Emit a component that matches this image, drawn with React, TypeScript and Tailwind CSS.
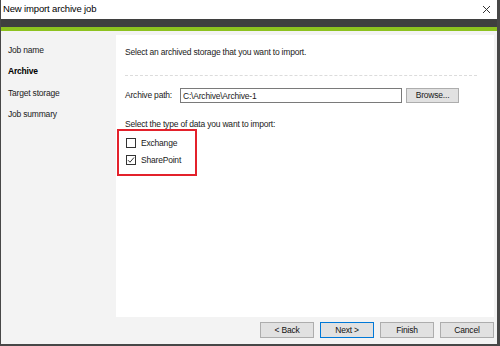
import { useState } from 'react';

const steps = ['Job name', 'Archive', 'Target storage', 'Job summary'];

function CheckBox({ checked, label, onToggle }: { checked: boolean; label: string; onToggle: () => void }) {
  return (
    <label className="flex items-center gap-[5px] h-[12px] cursor-default" onClick={onToggle}>
      <span className="w-[10px] h-[10px] border border-[#333333] bg-white flex items-center justify-center">
        {checked && (
          <svg width="8" height="8" viewBox="0 0 8 8">
            <path d="M1 4.2 L3 6.2 L7 1.5" fill="none" stroke="#333" strokeWidth="1" />
          </svg>
        )}
      </span>
      <span>{label}</span>
    </label>
  );
}

function Button({ label, primary }: { label: string; primary?: boolean }) {
  return (
    <button
      className={
        'w-[54px] h-[16px] bg-[#e1e1e1] border text-[8.5px] tracking-[-0.2px] leading-none text-[#111] ' +
        (primary ? 'border-[#0078d7]' : 'border-[#adadad]')
      }
    >
      {label}
    </button>
  );
}

export default function App() {
  const [exchange, setExchange] = useState(false);
  const [sharePoint, setSharePoint] = useState(true);

  return (
    <div
      className="w-[500px] h-[346px] flex flex-col bg-[#f3f3f3] border-l border-r-[3px] border-b-2 border-[#474747] text-[8.5px] tracking-[-0.2px] text-[#1a1a1a]"
      style={{ fontFamily: '"Liberation Sans", Arial, sans-serif' }}
    >
      {/* title bar */}
      <div className="h-[19px] bg-white flex items-center justify-between pl-[2px] pr-[6px] shrink-0">
        <span className="text-[9.5px] tracking-[-0.15px] text-black">New import archive job</span>
        <svg width="9" height="9" viewBox="0 0 9 9">
          <path d="M1 1 L8 8 M8 1 L1 8" stroke="#333" strokeWidth="1" />
        </svg>
      </div>
      <div className="h-[8px] bg-[#3f3f3f] shrink-0" />
      <div className="h-[4px] bg-[#8dc21f] shrink-0" />

      <div className="flex flex-1 min-h-0">
        {/* steps */}
        <div className="w-[115px] shrink-0 flex flex-col pl-[7px] pt-[13px] gap-[9px]">
          {steps.map(s => (
            <div key={s} className={'h-[12.5px] flex items-center ' + (s === 'Archive' ? 'font-bold text-black' : '')}>
              {s}
            </div>
          ))}
        </div>

        {/* content */}
        <div className="flex-1 flex flex-col">
          <div className="flex-1 bg-white mt-[4px] mr-[3px] pl-[9px] pr-[17px] pt-[11px]">
            <div className="h-[12px] flex items-center">Select an archived storage that you want to import.</div>
            <div className="mt-[17px] border-t border-dashed border-[#dcdcdc]" />
            <div className="mt-[12px] flex items-center">
              <span className="w-[55px]">Archive path:</span>
              <input
                className="w-[222px] h-[15px] border border-[#7a7a7a] px-[2px] text-[8.5px] tracking-[-0.2px] outline-none"
                defaultValue="C:\Archive\Archive-1"
              />
              <button className="ml-[4px] w-[53px] h-[15px] bg-[#e1e1e1] border border-[#adadad] text-[8.5px] leading-none">
                Browse...
              </button>
            </div>
            <div className="mt-[15px] h-[12px] flex items-center">Select the type of data you want to import:</div>
            <div className="-mt-[1px] -ml-[8px] w-[80px] h-[47px] border-2 border-[#e3212b] pl-[7px] pt-[6px] flex flex-col gap-[5px]">
              <CheckBox checked={exchange} label="Exchange" onToggle={() => setExchange(!exchange)} />
              <CheckBox checked={sharePoint} label="SharePoint" onToggle={() => setSharePoint(!sharePoint)} />
            </div>
          </div>
          <div className="h-[27px] shrink-0 flex items-center justify-end gap-[6px] pr-[3px] pb-[1px]">
            <Button label="< Back" />
            <Button label="Next >" primary />
            <Button label="Finish" />
            <Button label="Cancel" />
          </div>
        </div>
      </div>
    </div>
  );
}
